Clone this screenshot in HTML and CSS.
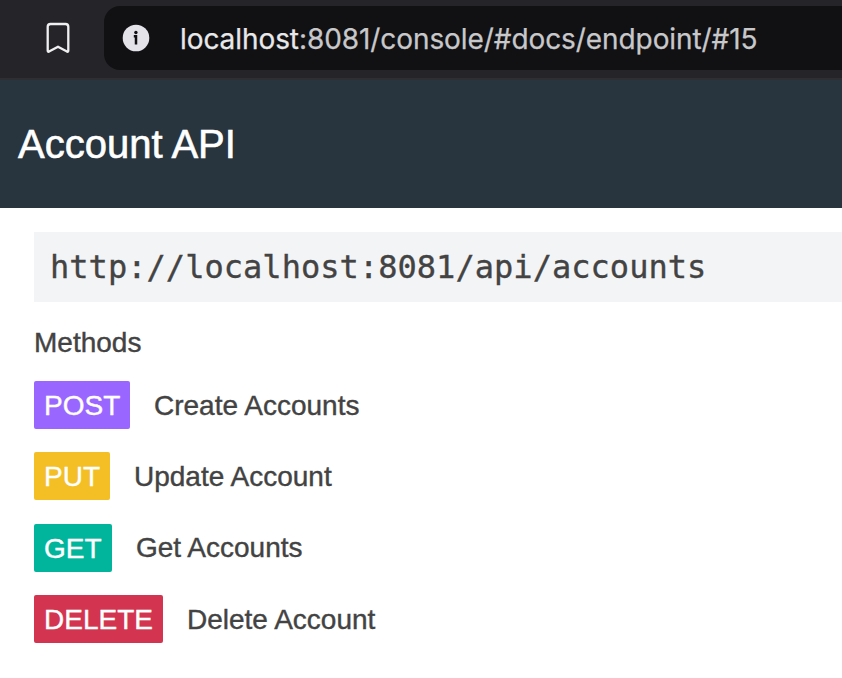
FILE: index.html
```html
<!DOCTYPE html>
<html lang="en">
<head>
<meta charset="utf-8">
<title>Account API</title>
<link rel="stylesheet" href="styles.css">
</head>
<body>
<div class="toolbar">
  <svg class="bookmark" width="24" height="32" viewBox="0 0 24 32"><path d="M4.500 2h15a2.800 2.800 0 0 1 2.800 2.800V28.500q0 2-1.800.8L12 24.700 3.500 29.300q-1.800 1.200-1.800-.8V4.800A2.800 2.800 0 0 1 4.500 2Z"/></svg>
  <div class="address">
    <svg class="info" width="28" height="28" viewBox="0 0 28 28"><circle cx="14" cy="14" r="13.300"/><path d="M11.800 12.300h2.200V20.500"/><circle class="dot" cx="13.900" cy="8.500" r="1.700"/></svg>
    <span class="url"><span class="host">localhost</span><span class="path">:8081/console/#docs/endpoint/#15</span></span>
  </div>
</div>
<header class="header"><h1>Account API</h1></header>
<main class="content">
  <div class="endpoint">http://localhost:8081/api/accounts</div>
  <h2>Methods</h2>
  <ul class="methods">
    <li><span class="badge post">POST</span><span class="label">Create Accounts</span></li>
    <li><span class="badge put">PUT</span><span class="label">Update Account</span></li>
    <li><span class="badge get">GET</span><span class="label">Get Accounts</span></li>
    <li><span class="badge delete">DELETE</span><span class="label">Delete Account</span></li>
  </ul>
</main>
</body>
</html>
```
FILE: styles.css
```css
* { box-sizing: border-box; }
body { margin: 0; height: 678px; overflow: hidden; background: #fff; color: #434343; font-family: "Liberation Sans", Arial, sans-serif; }
.toolbar { height: 80px; padding: 6px 0 8px 46px; display: flex; background: #252429; border-bottom: 2px solid #2e2e33; }
.bookmark { margin-top: 16px; fill: none; stroke: #f0f0f2; stroke-width: 2.3; stroke-linejoin: round; flex: none; }
.address { flex: 1; margin-left: 34px; padding-left: 18px; display: flex; align-items: center; background: #111114; border-radius: 16px 0 0 16px; }
.info { fill: #e4e3e9; flex: none; }
.info path { fill: none; stroke: #111114; stroke-width: 2.5; }
.info .dot { fill: #111114; }
.url { margin-left: 30px; padding-top: 1px; font: 28px/36px Inter, sans-serif; letter-spacing: -.08px; white-space: nowrap; color: #c8c8ca; -webkit-text-stroke: .25px; }
.host { color: #e8e8ea; }
.header { height: 128px; display: flex; align-items: center; padding-left: 18px; background: #28353e; }
h1 { margin: 0; color: #fff; font-size: 40px; font-weight: 400; -webkit-text-stroke: .6px; }
.content { padding: 24px 0 0 34px; }
.endpoint { height: 70px; padding-left: 16px; line-height: 70px; font-family: "DejaVu Sans Mono", monospace; font-size: 32px; letter-spacing: .04px; background: #f3f4f6; white-space: nowrap; -webkit-text-stroke: .35px; }
h2 { margin: 24px 0 22px; font-size: 28px; line-height: 33px; font-weight: 400; -webkit-text-stroke: .4px; }
.methods { margin: 0; padding: 0; list-style: none; display: grid; row-gap: 23.400px; }
li { display: flex; align-items: center; height: 48px; font-size: 28px; -webkit-text-stroke: .4px; }
.badge { height: 48px; padding-left: 10px; line-height: 49px; color: #fff; border-radius: 2px; }
.post { width: 96px; background: #9966ff; }
.put { width: 76px; background: #f4be25; }
.get { width: 78px; background: #00b59c; }
.delete { width: 129px; background: #d3344f; }
.label { margin-left: 24px; line-height: 49px; }
```
